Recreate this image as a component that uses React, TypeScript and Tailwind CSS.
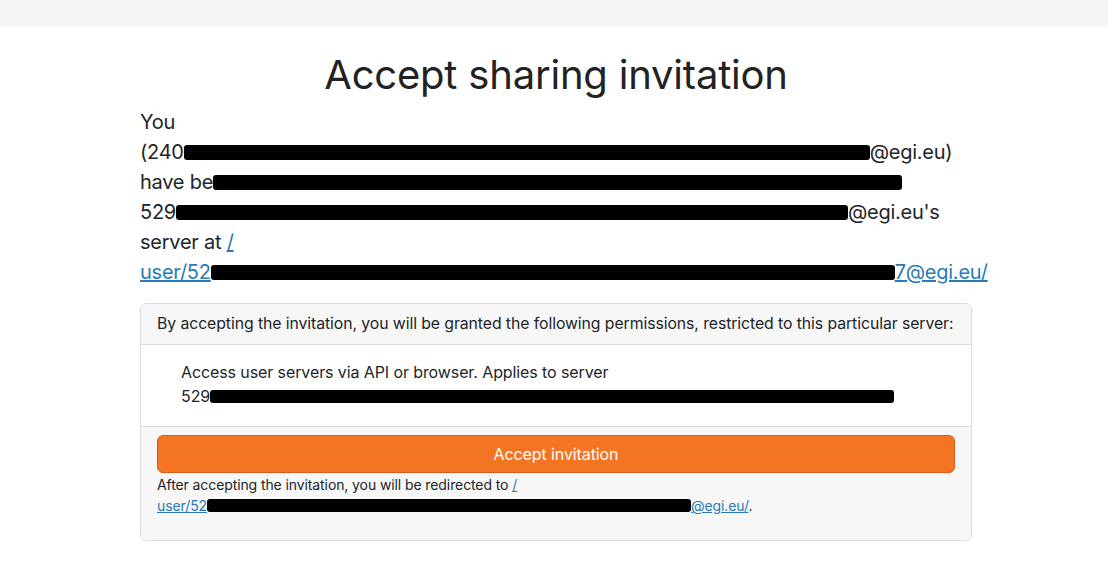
const font = { fontFamily: "Inter, 'Liberation Sans', sans-serif" };

function Redact({ w, h = "h-[15px]" }: { w: string; h?: string }) {
  return (
    <span
      className={`inline-block ${w} ${h} bg-black rounded-[3px] align-middle blur-[0.6px] -mt-[3px]`}
    />
  );
}

export default function App() {
  return (
    <div className="min-h-[583px] bg-white text-[#212529]" style={font}>
      <div className="h-[27px] bg-[#f5f5f5]" />
      <div className="w-[836px] pl-[4px] mx-auto">
        <h1 className="text-center text-[40px] leading-[48px] mt-[24px] mb-[8px] tracking-[-0.2px] text-[#222]">
          Accept sharing invitation
        </h1>
        <div className="text-[20px] leading-[30px] tracking-[-0.25px]">
          <div>You</div>
          <div className="whitespace-nowrap">
            (240<Redact w="w-[686px]" />@egi.eu)
          </div>
          <div className="whitespace-nowrap">
            have be<Redact w="w-[689px]" />
          </div>
          <div className="whitespace-nowrap">
            529<Redact w="w-[672px]" />@egi.eu's
          </div>
          <div>
            server at{" "}
            <a href="#" className="text-[#2a7ab8] underline">
              /
            </a>
          </div>
          <div className="whitespace-nowrap">
            <a href="#" className="text-[#2a7ab8] underline">
              user/52<Redact w="w-[684px]" />7@egi.eu/
            </a>
          </div>
        </div>

        <div className="mt-[16px] border border-[#dcdcdc] rounded-[6px] overflow-hidden">
          <div className="bg-[#f7f7f7] px-4 h-[41px] flex items-center whitespace-nowrap text-[15.8px] tracking-[-0.08px] border-b border-[#dcdcdc]">
            By accepting the invitation, you will be granted the following permissions, restricted to this particular server:
          </div>
          <div className="bg-white px-4 pt-[15px] pb-[18px]">
            <ul className="pl-[24px] text-[16px] leading-[24px] tracking-[-0.1px]">
              <li>
                Access user servers via API or browser. Applies to server
                <br />
                <span className="whitespace-nowrap">
                  529<Redact w="w-[684px]" h="h-[13px]" />
                </span>
              </li>
            </ul>
          </div>
          <div className="bg-[#f7f7f7] border-t border-[#dcdcdc] px-4 pt-[8px] pb-[24px]">
            <button className="w-full h-[38px] bg-[#f37524] border border-[#e2581a] rounded-[6px] text-white text-[16px] tracking-[-0.1px]">
              Accept invitation
            </button>
            <div className="text-[14px] leading-[21px] tracking-[-0.1px] mt-[1px]">
              After accepting the invitation, you will be redirected to{" "}
              <a href="#" className="text-[#2a7ab8] underline">
                /
              </a>
              <br />
              <span className="whitespace-nowrap">
                <a href="#" className="text-[#2a7ab8] underline">
                  user/52<Redact w="w-[484px]" h="h-[13px]" />@egi.eu/
                </a>
                .
              </span>
            </div>
          </div>
        </div>
      </div>
    </div>
  );
}
